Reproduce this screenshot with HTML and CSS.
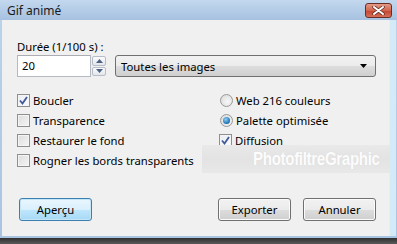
FILE: index.html
```html
<!DOCTYPE html>
<html lang="fr">
<head>
    <meta charset="UTF-8">
    <title>Gif animé</title>
    <link rel="stylesheet" href="styles.css">
</head>
<body>
    <div class="window">
        <div class="titlebar">
            <span class="title">Gif animé</span>
            <span class="close">
                <svg width="13" height="9" viewBox="0 0 13 9">
                    <path d="M2 1 L11 8 M11 1 L2 8" stroke="#5a2620" stroke-width="3.4" stroke-linecap="round"/>
                    <path d="M2 1 L11 8 M11 1 L2 8" stroke="#ffffff" stroke-width="2" stroke-linecap="round"/>
                </svg>
            </span>
        </div>
        <div class="client">
            <div class="label">Durée (1/100 s) :</div>
            <div class="top-row">
                <div class="spin">
                    <div class="spin-field">20</div>
                    <div class="spin-buttons">
                        <span class="spin-btn"><svg width="7" height="4"><path d="M0 4 L3.5 0 L7 4 Z" fill="#4d6185"/></svg></span>
                        <span class="spin-btn"><svg width="7" height="4"><path d="M0 0 L3.5 4 L7 0 Z" fill="#4d6185"/></svg></span>
                    </div>
                </div>
                <div class="combo">
                    <span>Toutes les images</span>
                    <svg width="7" height="4"><path d="M0 0 L7 0 L3.5 4 Z" fill="#000"/></svg>
                </div>
            </div>

            <div class="options">
                <div class="col">
                    <div class="opt"><span class="check on"><svg width="9" height="9" viewBox="0 0 9 9"><path d="M1 4.5 L3.5 7.5 L8 1" fill="none" stroke="#3f5a95" stroke-width="1.8"/></svg></span>Boucler</div>
                    <div class="opt"><span class="check"></span>Transparence</div>
                    <div class="opt"><span class="check"></span>Restaurer le fond</div>
                    <div class="opt"><span class="check"></span>Rogner les bords transparents</div>
                </div>
                <div class="col">
                    <div class="opt"><span class="radio"></span>Web 216 couleurs</div>
                    <div class="opt"><span class="radio on"><span class="dot"></span></span>Palette optimisée</div>
                    <div class="opt"><span class="check on"><svg width="9" height="9" viewBox="0 0 9 9"><path d="M1 4.5 L3.5 7.5 L8 1" fill="none" stroke="#3f5a95" stroke-width="1.8"/></svg></span>Diffusion</div>
                </div>
            </div>

            <div class="buttons">
                <button class="btn default">Aperçu</button>
                <div class="btn-group">
                    <button class="btn">Exporter</button>
                    <button class="btn">Annuler</button>
                </div>
            </div>

            <div class="watermark"><span class="wm-text">PhotofiltreGraphic</span></div>
        </div>
    </div>
    <div class="desktop"></div>
</body>
</html>
```

FILE: styles.css
```css
body {
    margin: 0;
    width: 397px;
    height: 244px;
    overflow: hidden;
    font-family: "Noto Sans", "Open Sans", sans-serif;
    font-size: 11.3px;
    color: #000;
    background-color: #4a4a4a;
}
.window {
    height: 238px;
    display: flex;
    flex-direction: column;
    background: linear-gradient(#bcd3eb, #a9c4e2);
}
.titlebar {
    height: 20px;
    display: flex;
    align-items: center;
    justify-content: space-between;
    padding-left: 7px;
    padding-right: 5px;
    background: linear-gradient(#c3d8ee, #a6c1e0);
}
.title {
    font-size: 12px;
    color: #1a1a1a;
}
.close {
    width: 25px;
    height: 13px;
    margin-top: 1px;
    display: flex;
    align-items: center;
    justify-content: center;
    border: 1px solid #6a2d26;
    border-radius: 3px;
    background: linear-gradient(#e39a88, #d0654e 50%, #c2432e 51%, #d66f56);
}
.client {
    position: relative;
    flex: 1;
    margin-left: 2px;
    margin-right: 7px;
    margin-bottom: 2px;
    padding: 19px 13px 0 15px;
    background-color: #f0f0f0;
    border-right: 1px solid #e8eef4;
    box-shadow: 6px 0 0 #d4eaf7;
}
.label {
    line-height: 15px;
}
.top-row {
    display: flex;
    gap: 9px;
    margin-top: 1px;
    height: 22px;
}
.spin {
    display: flex;
    width: 89px;
}
.spin-field {
    width: 69px;
    padding-left: 4px;
    line-height: 20px;
    background-color: #fff;
    border: 1px solid #b5b9c2;
    border-top-color: #abadb3;
}
.spin-buttons {
    width: 14px;
    margin-left: 1px;
    display: flex;
    flex-direction: column;
    gap: 1px;
    padding: 1px 0;
}
.spin-btn {
    flex: 1;
    display: flex;
    align-items: center;
    justify-content: center;
    border: 1px solid #b6bcc8;
    border-radius: 2px;
    background: linear-gradient(#fbfbfb, #e3e6eb);
}
.combo {
    flex: 1;
    display: flex;
    align-items: center;
    justify-content: space-between;
    padding: 0 8px 0 5px;
    border: 1px solid #707070;
    border-radius: 3px;
    background: linear-gradient(#f2f2f2, #ebebeb 50%, #dddddd 51%, #cfcfcf);
}
.options {
    display: grid;
    grid-template-columns: 202px 1fr;
    margin-top: 13px;
}
.opt {
    height: 20px;
    display: flex;
    align-items: center;
}
.check {
    width: 11px;
    height: 11px;
    margin-right: 3px;
    border: 1px solid #8f8f8f;
    display: flex;
    align-items: center;
    justify-content: center;
    background: linear-gradient(135deg, #dcdcdc, #f6f6f6);
    box-shadow: inset 0 0 0 1px #f4f4f4;
}
.check.on {
    background: linear-gradient(135deg, #e9ecf3, #fbfbfd);
}
.radio {
    width: 11px;
    height: 11px;
    margin-left: 1px;
    margin-right: 3px;
    border: 1px solid #999;
    border-radius: 50%;
    display: flex;
    align-items: center;
    justify-content: center;
    background: radial-gradient(circle at 60% 60%, #f8f8f8, #d6d6d6);
}
.dot {
    width: 7px;
    height: 7px;
    border-radius: 50%;
    background: radial-gradient(circle at 40% 35%, #8ed0f4, #1d6fb0 70%, #184d85);
}
.buttons {
    display: flex;
    justify-content: space-between;
    margin-top: 28px;
    padding-left: 2px;
}
.btn-group {
    display: flex;
    gap: 12px;
}
.btn {
    width: 73px;
    height: 23px;
    padding: 0;
    font-family: inherit;
    font-size: 11.3px;
    color: #000;
    border: 1px solid #707070;
    border-radius: 3px;
    background: linear-gradient(#f2f2f2, #ebebeb 50%, #dddddd 51%, #cfcfcf);
    box-shadow: inset 0 0 0 1px #fbfbfb;
}
.btn.default {
    border-color: #3c7fb1;
    background: linear-gradient(#eaf6fd, #d9f0fc 50%, #bee6fd 51%, #a7d9f5);
    box-shadow: inset 0 0 0 1px #c4e5f6;
}
.watermark {
    position: absolute;
    left: 200px;
    top: 125px;
    width: 188px;
    height: 28px;
    padding-left: 51px;
    box-sizing: border-box;
    background: linear-gradient(#e9e9e9, #e3e3e3 50%, #e8e8e8);
    white-space: nowrap;
}
.wm-text {
    display: inline-block;
    line-height: 29px;
    font-family: "Liberation Sans", Arial, sans-serif;
    font-size: 18px;
    font-weight: bold;
    letter-spacing: -0.4px;
    color: #fcfcfc;
    text-shadow: 0 0 1px #d4d4d4;
    transform: scaleX(0.84);
    transform-origin: left center;
}
.desktop {
    height: 6px;
    background: linear-gradient(#303030, #5a5a5a);
}
```
